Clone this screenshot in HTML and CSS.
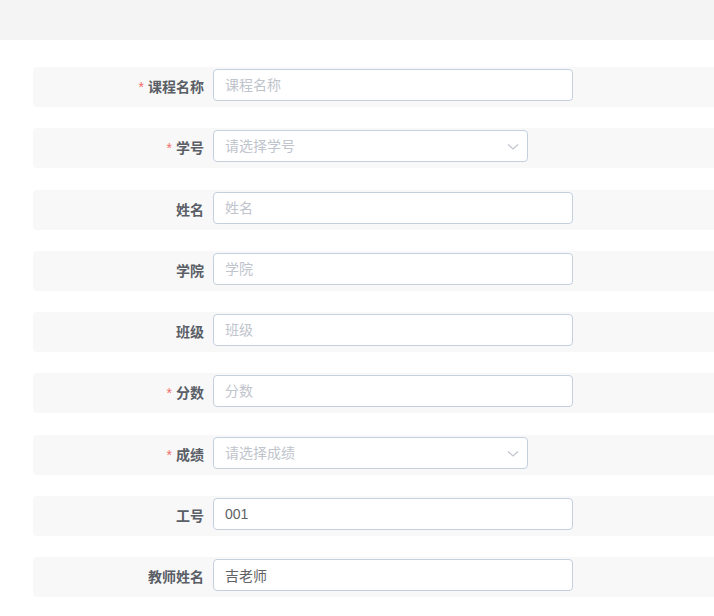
FILE: index.html
```html
<!DOCTYPE html>
<html lang="zh-CN">
<head>
    <meta charset="UTF-8">
    <meta name="viewport" content="width=device-width, initial-scale=1.0">
    <title>成绩录入</title>
    <link rel="stylesheet" href="styles.css">
</head>
<body>

    <div class="topbar"></div>

    <form class="form">
        <div class="form-item">
            <label class="label required">课程名称</label>
            <input class="input" type="text" placeholder="课程名称">
        </div>

        <div class="form-item">
            <label class="label required">学号</label>
            <div class="select">
                <input class="input" type="text" placeholder="请选择学号" readonly>
                <svg class="arrow" viewBox="0 0 12 8" width="12" height="8"><path d="M1 1.5 L6 6 L11 1.5" fill="none" stroke="#c0c4cc" stroke-width="1.2"/></svg>
            </div>
        </div>

        <div class="form-item">
            <label class="label">姓名</label>
            <input class="input" type="text" placeholder="姓名">
        </div>

        <div class="form-item">
            <label class="label">学院</label>
            <input class="input" type="text" placeholder="学院">
        </div>

        <div class="form-item">
            <label class="label">班级</label>
            <input class="input" type="text" placeholder="班级">
        </div>

        <div class="form-item">
            <label class="label required">分数</label>
            <input class="input" type="text" placeholder="分数">
        </div>

        <div class="form-item">
            <label class="label required">成绩</label>
            <div class="select">
                <input class="input" type="text" placeholder="请选择成绩" readonly>
                <svg class="arrow" viewBox="0 0 12 8" width="12" height="8"><path d="M1 1.5 L6 6 L11 1.5" fill="none" stroke="#c0c4cc" stroke-width="1.2"/></svg>
            </div>
        </div>

        <div class="form-item">
            <label class="label">工号</label>
            <input class="input" type="text" value="001">
        </div>

        <div class="form-item">
            <label class="label">教师姓名</label>
            <input class="input" type="text" value="吉老师">
        </div>
    </form>

</body>
</html>
```

FILE: styles.css
```css
body {
    margin: 0;
    font-family: "Liberation Sans", "Noto Sans CJK SC", sans-serif;
    font-size: 14px;
    color: #606266;
    background: #fff;
    overflow: hidden;
}

.topbar {
    height: 40px;
    background: #f4f4f4;
}

.form {
    padding: 27px 0 0 33px;
}

.form-item {
    display: flex;
    align-items: flex-start;
    height: 40px;
    margin-bottom: 21.25px;
    background: #f8f8f8;
    border-radius: 4px 0 0 4px;
}

.label {
    width: 171px;
    padding-right: 9px;
    text-align: right;
    line-height: 40px;
    font-weight: bold;
    color: #5a5e66;
}

.required::before {
    content: "*";
    color: #f56c6c;
    margin-right: 4px;
    font-weight: normal;
}

.input {
    box-sizing: border-box;
    width: 360px;
    height: 32px;
    margin-top: 2px;
    padding: 0 11px;
    border: 1px solid #c4d0de;
    border-radius: 4px;
    background: #fff;
    font-family: inherit;
    font-size: 14px;
    color: #606266;
    outline: none;
}

.input::placeholder {
    color: #c0c4cc;
}

.select {
    position: relative;
}

.select .input {
    width: 315px;
    padding-right: 30px;
}

.select .arrow {
    position: absolute;
    right: 9px;
    top: 15px;
}
```
